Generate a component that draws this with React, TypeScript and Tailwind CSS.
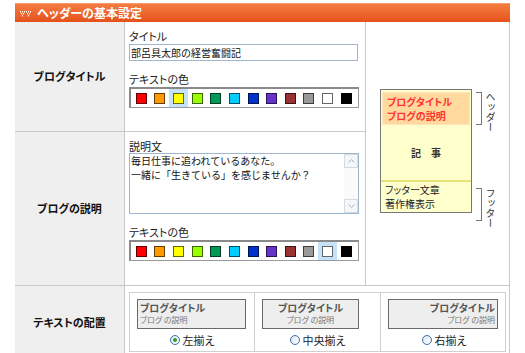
const jp = "font-['Noto_Sans_CJK_JP','Noto_Sans_CJK_SC',sans-serif]"
const palt = "[font-feature-settings:'palt']"

const swatches = [
  "bg-[#ff0000]",
  "bg-[#ff9900]",
  "bg-[#ffff00]",
  "bg-[#99ff00]",
  "bg-[#009955]",
  "bg-[#00ccff]",
  "bg-[#0033cc]",
  "bg-[#6633cc]",
  "bg-[#993333]",
  "bg-[#999999]",
  "bg-[#ffffff]",
  "bg-[#000000]",
]

const Palette = ({ selected }: { selected: number }) => (
  <div className="mt-[1px] flex h-[21px] w-[230px] items-center border-t-2 border-l-2 border-r border-b border-t-[#8a8a8a] border-l-[#8a8a8a] border-r-[#9a9a9a] border-b-[#9a9a9a] bg-white pl-[1px]">
    {swatches.map((c, i) => (
      <div
        key={c}
        className={`flex h-[18px] w-[18.64px] shrink-0 items-center justify-center ${i === selected ? "bg-[#c4e2fa]" : ""}`}
      >
        <div className={`h-[11px] w-[11px] border border-black/60 ${c}`} />
      </div>
    ))}
  </div>
)

const Label = ({ children, className = "" }: { children: React.ReactNode; className?: string }) => (
  <div className={`h-[13px] text-[11px] leading-[13px] text-[#222] ${palt} ${className}`}>{children}</div>
)

const Radio = ({ checked, label }: { checked?: boolean; label: string }) => (
  <div className="mt-[5px] flex items-center justify-center gap-[3px]">
    <span className="flex h-[10px] w-[10px] items-center justify-center rounded-full border border-[#3d6fa6] bg-linear-to-br from-[#dfe6ee] to-white">
      {checked && <span className="h-[4px] w-[4px] rounded-full bg-[#2f9e2f]" />}
    </span>
    <span className={`text-[11px] leading-[12px] text-[#222] ${palt}`}>{label}</span>
  </div>
)

const Preview = ({ align, width }: { align: string; width: string }) => (
  <div className={`ml-[7px] mt-[6px] h-[30px] ${width} border border-[#6a6a6a] bg-[#eeeeee] px-[2px] pt-[1px] ${align} ${palt}`}>
    <div className="text-[10px] font-bold leading-[13px] text-[#555]">ブログタイトル</div>
    <div className="text-[8px] leading-[11px] text-[#777]">ブログ の説明</div>
  </div>
)

const Bracket = ({ label, className = "" }: { label: string; className?: string }) => (
  <div className={`flex items-start ${className}`}>
    <div className="h-[33px] w-[6px] border-t border-r border-b border-[#777]" />
    <div className="ml-[3px] text-[10px] leading-[10px] text-[#333] [writing-mode:vertical-rl]">
      {label}
    </div>
  </div>
)

export default function App() {
  return (
    <div className={`min-h-[353px] bg-white pl-[15px] pt-[3px] ${jp}`}>
      <div className="w-[495px]">
        <div className="flex h-[19px] items-center border-t border-[#f89a6a] bg-linear-to-b from-[#f47c40] to-[#e5521a] pl-[5px]">
          <svg width="11" height="6" viewBox="0 0 11 6" className="mt-[1px]">
            {[
              [0, 0], [2, 0], [4, 0], [1, 2], [3, 2], [2, 4],
              [6, 0], [8, 0], [10, 0], [7, 2], [9, 2], [8, 4],
            ].map(([x, y]) => (
              <rect key={`${x}-${y}`} x={x} y={y} width="1" height="1.5" fill="#fff" />
            ))}
          </svg>
          <span className={`ml-[6px] text-[12px] font-bold leading-none text-white ${palt}`}>
            ヘッダーの基本設定
          </span>
        </div>

        <div className="grid grid-cols-[110px_241px_144px] grid-rows-[110px_154px_auto]">
          {/* row 1 */}
          <div className="flex items-center justify-center border-r border-b border-[#c8c8c8] bg-[#efefef]">
            <span className={`text-[11px] font-bold text-[#111] ${palt}`}>ブログタイトル</span>
          </div>
          <div className="border-r border-b border-[#c8c8c8] pl-[4px] pt-[8px]">
            <Label>タイトル</Label>
            <div className="mt-[1px] h-[17px] w-[229px] border border-[#9fb6cf] pl-[1px] text-[10px] leading-[15px] text-[#111]">
              部呂具太郎の経営奮闘記
            </div>
            <Label className="mt-[12px]">テキストの色</Label>
            <Palette selected={2} />
          </div>
          <div className="row-span-2 flex border-r border-b border-[#c8c8c8] pl-[14px] pt-[67px]">
            <div className={`h-[124px] w-[92px] border border-[#777] bg-[#ffffcc] ${palt}`}>
              <div className="mx-[1px] mt-[2px] h-[33px] border border-[#fde6bd] bg-[#ffd99d] pl-[4px] pt-[2px] text-[10px] font-bold leading-[14px] text-[#ff3333]">
                <div>ブログタイトル</div>
                <div>ブログの説明</div>
              </div>
              <div className="flex h-[55px] items-center justify-center text-[10px] font-bold text-[#333]">
                記　事
              </div>
              <div className="h-[2px] bg-[#e8e27c]" />
              <div className="pl-[4px] pt-[1px] text-[10px] leading-[14px] text-[#222]">
                <div>フッター文章</div>
                <div>著作権表示</div>
              </div>
            </div>
            <div className="ml-[4px] flex flex-col">
              <Bracket label="ヘッダー" className="mt-[3px]" />
              <Bracket label="フッター" className="mt-[56px]" />
            </div>
          </div>

          {/* row 2 */}
          <div className="flex items-center justify-center border-r border-b border-[#c8c8c8] bg-[#efefef]">
            <span className={`text-[11px] font-bold text-[#111] ${palt}`}>ブログの説明</span>
          </div>
          <div className="border-r border-b border-[#c8c8c8] pl-[4px] pt-[8px]">
            <Label>説明文</Label>
            <div className="flex h-[61px] w-[230px] border border-[#9fb6cf]">
              <div className="flex-1 pl-[1px] text-[10px] leading-[14px] text-[#111]">
                <div>毎日仕事に追われているあなた。</div>
                <div>一緒に「生きている」を感じませんか？</div>
              </div>
              <div className="flex w-[14px] flex-col justify-between bg-[#fafafa]">
                <div className="flex h-[14px] items-center justify-center border border-[#d4dbe3] bg-[#f4f6f8]">
                  <svg width="7" height="4" viewBox="0 0 7 4">
                    <path d="M0.5 3.5 L3.5 0.5 L6.5 3.5" fill="none" stroke="#a8b2bc" />
                  </svg>
                </div>
                <div className="flex h-[14px] items-center justify-center border border-[#d4dbe3] bg-[#f4f6f8]">
                  <svg width="7" height="4" viewBox="0 0 7 4">
                    <path d="M0.5 0.5 L3.5 3.5 L6.5 0.5" fill="none" stroke="#a8b2bc" />
                  </svg>
                </div>
              </div>
            </div>
            <Label className="mt-[12px]">テキストの色</Label>
            <Palette selected={10} />
          </div>

          {/* row 3 */}
          <div className="flex items-center justify-center border-r border-[#c8c8c8] bg-[#efefef]">
            <span className={`text-[11px] font-bold text-[#111] ${palt}`}>テキストの配置</span>
          </div>
          <div className="col-span-2 border-r border-[#c8c8c8] pb-[6px] pl-[4px] pt-[6px]">
            <div className="grid h-[60px] w-[377px] grid-cols-[125px_126px_126px] border border-[#d0d0d0]">
              <div className="border-r border-[#d0d0d0]">
                <Preview align="text-left" width="w-[109px]" />
                <Radio checked label="左揃え" />
              </div>
              <div className="border-r border-[#d0d0d0]">
                <Preview align="text-center" width="w-[97px]" />
                <Radio label="中央揃え" />
              </div>
              <div>
                <Preview align="text-right" width="w-[110px]" />
                <Radio label="右揃え" />
              </div>
            </div>
          </div>
        </div>
      </div>
    </div>
  )
}
